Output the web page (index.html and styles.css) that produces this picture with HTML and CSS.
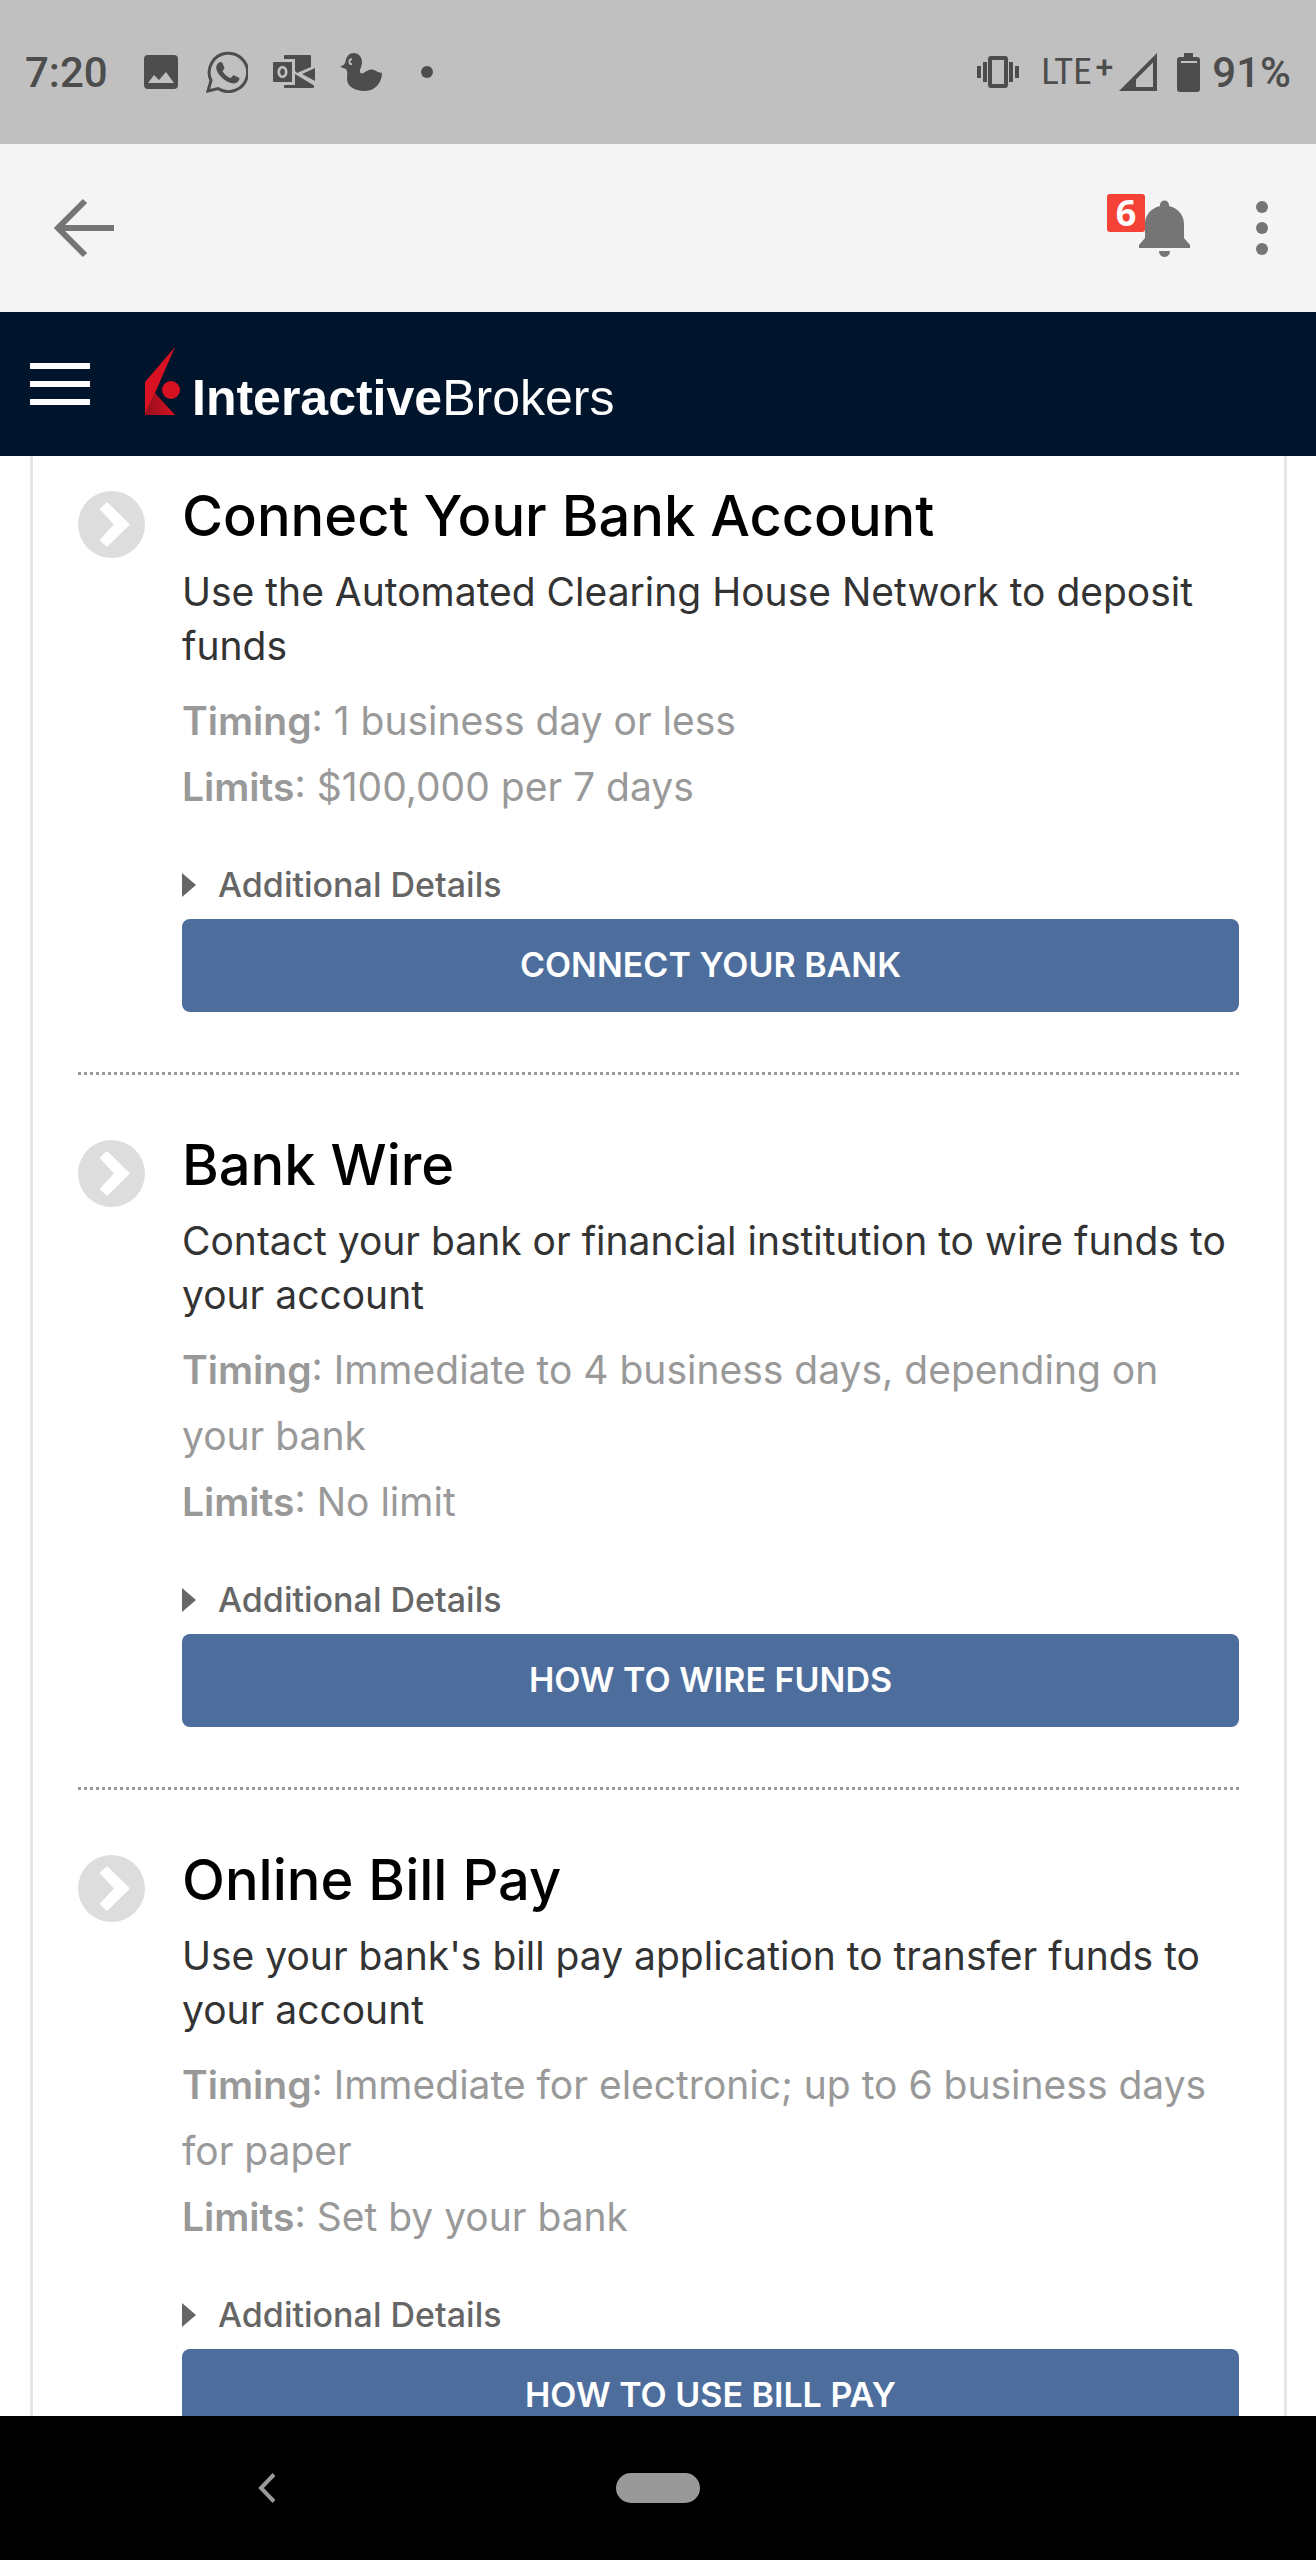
FILE: index.html
```
<!DOCTYPE html>
<html lang="en">
<head>
    <meta charset="UTF-8" />
    <meta name="viewport" content="width=device-width, initial-scale=1" />
    <title>Interactive Brokers - Deposit Funds</title>
    <link rel="stylesheet" href="styles.css">
</head>
<body>
    <div class="status-bar">
        <span class="clock">7:20</span>
        <div class="notifications">
            <svg width="34" height="34" viewBox="0 0 34 34">
                <path fill="currentColor" fill-rule="evenodd" d="M4 0h26a4 4 0 0 1 4 4v26a4 4 0 0 1-4 4H4a4 4 0 0 1-4-4V4a4 4 0 0 1 4-4zM4 28h26l-8-11-7 8-5-5z" />
            </svg>
            <svg width="42" height="42" viewBox="0 0 42 42">
                <path fill="none" stroke="currentColor" stroke-width="3" d="M2 40l3-10.500A19.200 19.200 0 1 1 12 37.500z" />
                <path fill="currentColor" d="M13 11.500c1-.8 2.700-.8 3.300.3l2 4.500c.3.800 0 1.500-.6 2.200l-1.200 1.500c1.800 3.300 4.300 5.600 8 7.200l2-2.300c.5-.6 1.100-.7 1.800-.4l4.300 2.100c.9.500.9 1 .6 2.100-.8 2.600-3.800 3.900-6 3.700-8-.8-16.700-9.400-17-15.600-.1-2.100 1.200-4.200 2.800-5.300z" />
            </svg>
            <svg width="42" height="34" viewBox="0 0 42 34">
                <path fill="currentColor" fill-rule="evenodd" d="M1 7h18v20H1a1 1 0 0 1-1-1V8a1 1 0 0 1 1-1zM9.500 11c-3 0-5 2.400-5 6s2 6 5 6 5-2.400 5-6-2-6-5-6zm0 2.600c1.500 0 2.300 1.300 2.300 3.400s-.8 3.400-2.300 3.400S7.200 19.100 7.200 17s.8-3.400 2.300-3.400z" />
                <path fill="currentColor" d="M12 0h25a1 1 0 0 1 1 1v11l-14 6-2-2V4H11V1a1 1 0 0 1 1-1zM42 13v13l-13-7zM22 19l19 11.500V32a1 1 0 0 1-1 1H12a1 1 0 0 1-1-1v-2h11z" />
            </svg>
            <svg width="42" height="40" viewBox="0 0 42 40">
                <path fill="currentColor" d="M0 14.500c3-.8 5-2.500 5.500-5C6.500 4 9.500 1 13.500 1 19 1 22.500 5.500 22 11c-.2 3.500-2.500 6-2 9 .4 1.500 2 1.800 3.500 1 4-2.500 6-4 9-3.500 3 .6 5 3.300 9.500 3.300C42 30 36 39 25 39 14 39 6.500 34 7 26c.2-3 .7-6-.5-8.500C5 16 2.500 16.500 0 14.500z" />
                <path fill="none" stroke="#c0c0c0" stroke-width="1.800" d="M12 7.200c-3.500 0-3.500 5 0 5" />
            </svg>
            <span class="more-dot"></span>
        </div>
        <div class="system">
            <svg class="vibrate" width="42" height="32" viewBox="0 0 42 32">
                <rect x="13" y="2" width="16" height="28" rx="1" fill="none" stroke="currentColor" stroke-width="4" />
                <path fill="currentColor" d="M0 10h4v12H0zM6 6h4v20H6zM32 6h4v20h-4zM38 10h4v12h-4z" />
            </svg>
            <span class="network">LTE<sup>+</sup></span>
            <svg class="signal" width="38" height="38" viewBox="0 0 38 38">
                <path fill="currentColor" fill-rule="evenodd" d="M38 0v38H0zM34 9.500L17 26.500V34h17z" />
            </svg>
            <svg class="battery" width="23" height="39" viewBox="0 0 23 39">
                <path fill="currentColor" fill-rule="evenodd" d="M7 0h9v4h4a3 3 0 0 1 3 3v29a3 3 0 0 1-3 3H3a3 3 0 0 1-3-3V7a3 3 0 0 1 3-3h4zM4 8v2h16V8z" />
            </svg>
            <span class="clock">91%</span>
        </div>
    </div>

    <div class="app-bar">
        <button type="button" class="icon-btn" aria-label="Back">
            <svg width="60" height="60" viewBox="0 0 60 60">
                <path fill="none" stroke="currentColor" stroke-width="6" d="M60 30H6M31 3L4 30l27 27" />
            </svg>
        </button>
        <div class="app-actions">
            <button type="button" class="icon-btn bell" aria-label="Notifications">
                <svg width="51" height="57" viewBox="0 0 51 57">
                    <path fill="currentColor" d="M21 6V5a4.500 4.500 0 0 1 9 0v1c9 2 15 9 15 18v14l6 7v3H0v-3l6-7V24C6 15 12 8 21 6zM20 51h11c0 3.500-2.500 6-5.500 6S20 54.500 20 51z" />
                </svg>
                <span class="badge">6</span>
            </button>
            <button type="button" class="icon-btn" aria-label="More options">
                <svg width="12" height="54" viewBox="0 0 12 54">
                    <g fill="currentColor">
                        <circle cx="6" cy="6" r="6" />
                        <circle cx="6" cy="27" r="6" />
                        <circle cx="6" cy="48" r="6" />
                    </g>
                </svg>
            </button>
        </div>
    </div>

    <header class="site-header">
        <button type="button" class="menu-btn" aria-label="Menu">
            <span></span>
            <span></span>
            <span></span>
        </button>
        <a href="#" class="logo">
            <svg width="36" height="68" viewBox="0 0 36 68">
                <defs>
                    <linearGradient id="fold" x1="0" y1="0" x2="1" y2="0">
                        <stop offset="0.1" stop-color="#9c0f1e" />
                        <stop offset="1" stop-color="#d81222" />
                    </linearGradient>
                </defs>
                <path fill="#d81222" d="M30 0L0 35v33l10-22z" />
                <path fill="url(#fold)" d="M10 46L0 68h30z" />
                <circle cx="26" cy="43" r="9" fill="#d81222" />
            </svg>
            <span class="logo-text"><b>Interactive</b>Brokers</span>
        </a>
    </header>

    <main>
        <div class="methods">
            <section class="method">
                <svg class="method-icon" width="67" height="67" viewBox="0 0 67 67">
                    <circle cx="33.500" cy="33.500" r="33.500" fill="#ddd" />
                    <path fill="#fff" stroke="#fff" stroke-width="3" stroke-linejoin="round" d="M29 13l21 20.500L29 54l-5.500-5L38 33.500 23.500 18z" />
                </svg>
                <div class="method-body">
                    <h2>Connect Your Bank Account</h2>
                    <p class="desc">Use the Automated Clearing House Network to deposit funds</p>
                    <p class="info"><b>Timing</b>: 1 business day or less</p>
                    <p class="info"><b>Limits</b>: $100,000 per 7 days</p>
                    <details>
                        <summary>Additional Details</summary>
                    </details>
                    <button type="button" class="action">CONNECT YOUR BANK</button>
                </div>
            </section>

            <section class="method">
                <svg class="method-icon" width="67" height="67" viewBox="0 0 67 67">
                    <circle cx="33.500" cy="33.500" r="33.500" fill="#ddd" />
                    <path fill="#fff" stroke="#fff" stroke-width="3" stroke-linejoin="round" d="M29 13l21 20.500L29 54l-5.500-5L38 33.500 23.500 18z" />
                </svg>
                <div class="method-body">
                    <h2>Bank Wire</h2>
                    <p class="desc">Contact your bank or financial institution to wire funds to your account</p>
                    <p class="info"><b>Timing</b>: Immediate to 4 business days, depending on your bank</p>
                    <p class="info"><b>Limits</b>: No limit</p>
                    <details>
                        <summary>Additional Details</summary>
                    </details>
                    <button type="button" class="action">HOW TO WIRE FUNDS</button>
                </div>
            </section>

            <section class="method">
                <svg class="method-icon" width="67" height="67" viewBox="0 0 67 67">
                    <circle cx="33.500" cy="33.500" r="33.500" fill="#ddd" />
                    <path fill="#fff" stroke="#fff" stroke-width="3" stroke-linejoin="round" d="M29 13l21 20.500L29 54l-5.500-5L38 33.500 23.500 18z" />
                </svg>
                <div class="method-body">
                    <h2>Online Bill Pay</h2>
                    <p class="desc">Use your bank's bill pay application to transfer funds to your account</p>
                    <p class="info"><b>Timing</b>: Immediate for electronic; up to 6 business days for paper</p>
                    <p class="info"><b>Limits</b>: Set by your bank</p>
                    <details>
                        <summary>Additional Details</summary>
                    </details>
                    <button type="button" class="action">HOW TO USE BILL PAY</button>
                </div>
            </section>
        </div>
    </main>

    <nav class="nav-bar">
        <button type="button" class="icon-btn nav-back" aria-label="Back">
            <svg width="18" height="30" viewBox="0 0 18 30">
                <path fill="none" stroke="currentColor" stroke-width="4" d="M16 1.500L3 15l13 13.500" />
            </svg>
        </button>
        <button type="button" class="nav-home" aria-label="Home"></button>
    </nav>
</body>
</html>
```
FILE: styles.css
```
* { box-sizing: border-box; }
body {
    display: flex;
    flex-direction: column;
    height: 100vh;
    margin: 0;
    background: #fff;
    color: #333;
    font-family: Inter, "Open Sans", sans-serif;
}
h2, p { margin: 0; }
svg { display: block; flex: none; }
button { padding: 0; border: 0; background: none; font: inherit; cursor: pointer; }
.icon-btn { color: #757575; }

/* phone status bar */
.status-bar {
    display: flex;
    flex: none;
    justify-content: space-between;
    height: 144px;
    padding: 0 25px;
    background: #c0c0c0;
    color: #4d4d4d;
    font-family: Roboto, sans-serif;
}
.status-bar, .notifications, .system { align-items: center; }
.notifications, .system { display: flex; }
.clock { font-size: 42px; font-weight: 500; }
.notifications { gap: 25px; margin: 0 auto 0 36px; }
.notifications svg:first-child { margin-right: 3px; }
.more-dot { width: 12px; height: 12px; margin-left: 14px; border-radius: 50%; background: #4d4d4d; }
.network { margin-left: 22px; font-family: "Roboto Condensed", Roboto, sans-serif; font-size: 37px; line-height: 40px; }
.network sup { margin-left: 4px; font-family: Roboto, sans-serif; font-size: 32px; font-weight: 500; line-height: 0; vertical-align: 6px; }
.signal { margin-left: 6px; }
.battery { margin: 0 12px 0 20px; }

/* app bar */
.app-bar {
    display: flex;
    flex: none;
    align-items: center;
    justify-content: space-between;
    height: 168px;
    padding: 0 48px 0 54px;
    background: #f4f4f4;
}
.app-actions { display: flex; align-items: center; gap: 66px; }
.bell { position: relative; }
.badge {
    position: absolute;
    top: -6px;
    left: -32px;
    width: 38px;
    height: 38px;
    border-radius: 3px;
    background: #f44336;
    color: #fff;
    font: bold 36px/38px "Open Sans", sans-serif;
    text-align: center;
}

/* site header */
.site-header {
    display: flex;
    flex: none;
    align-items: center;
    gap: 55px;
    height: 144px;
    padding: 0 30px;
    background: #00142b;
}
.menu-btn { display: flex; flex-direction: column; gap: 12px; width: 60px; }
.menu-btn span { height: 6px; background: #fff; }
.logo { display: flex; align-items: baseline; gap: 11px; color: #fff; text-decoration: none; }
.logo-text { font: 50px/48px "Liberation Sans", Arial, sans-serif; }

/* deposit methods */
main { flex: 1; min-height: 0; overflow: hidden; }
.methods {
    margin: 0 29px 0 30px;
    padding: 35px 45px 0;
    border: solid #e6e6e6;
    border-width: 0 3px;
}
.method { display: flex; gap: 37px; margin-bottom: 65px; padding-bottom: 60px; border-bottom: 3px dotted #999; }
.method-body { flex: 1; }
.method h2 { margin-bottom: 24px; color: #000; font-size: 56px; font-weight: 500; line-height: 50px; }
.desc { margin-bottom: 15px; font-size: 39px; line-height: 54px; }
.info { color: #999; font-size: 39px; line-height: 66px; }
.info b { font-weight: 600; }
details { margin: 45px 0 14px; color: #666; font-size: 34px; font-weight: 500; line-height: 40px; }
summary { display: flex; align-items: center; gap: 22px; list-style: none; cursor: pointer; }
summary::before {
    content: "";
    border: solid transparent;
    border-width: 12px 0 12px 14px;
    border-left-color: #666;
}
.action {
    display: block;
    width: 100%;
    height: 93px;
    padding-bottom: 2px;
    border-radius: 8px;
    background: #4d6e9d;
    color: #fff;
    font-size: 34px;
    font-weight: 600;
}

/* phone navigation */
.nav-bar {
    display: grid;
    flex: none;
    grid-template-columns: 1fr 84px 1fr;
    align-items: center;
    height: 144px;
    background: #000;
}
.nav-back { justify-self: center; padding-right: 82px; color: #999; }
.nav-home { height: 30px; border-radius: 15px; background: #999; }
```
